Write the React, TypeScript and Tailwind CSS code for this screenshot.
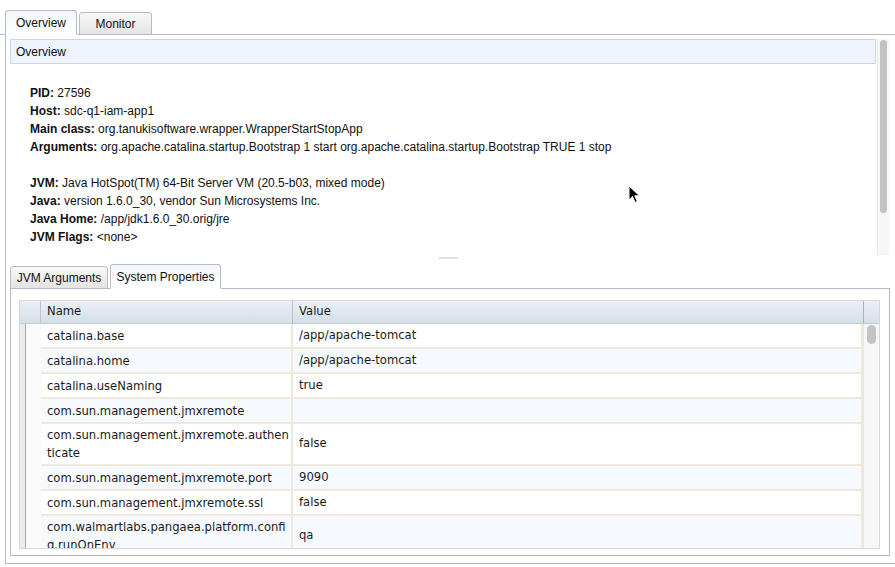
import React from "react";

const overviewLines: [string, string][] = [
  ["PID:", "27596"],
  ["Host:", "sdc-q1-iam-app1"],
  ["Main class:", "org.tanukisoftware.wrapper.WrapperStartStopApp"],
  ["Arguments:", "org.apache.catalina.startup.Bootstrap 1 start org.apache.catalina.startup.Bootstrap TRUE 1 stop"],
];

const jvmLines: [string, string][] = [
  ["JVM:", "Java HotSpot(TM) 64-Bit Server VM (20.5-b03, mixed mode)"],
  ["Java:", "version 1.6.0_30, vendor Sun Microsystems Inc."],
  ["Java Home:", "/app/jdk1.6.0_30.orig/jre"],
  ["JVM Flags:", "<none>"],
];

type Prop = { name: string[]; value: string; h: number };

const props: Prop[] = [
  { name: ["catalina.base"], value: "/app/apache-tomcat", h: 25 },
  { name: ["catalina.home"], value: "/app/apache-tomcat", h: 25 },
  { name: ["catalina.useNaming"], value: "true", h: 25 },
  { name: ["com.sun.management.jmxremote"], value: "", h: 25 },
  { name: ["com.sun.management.jmxremote.authen", "ticate"], value: "false", h: 42 },
  { name: ["com.sun.management.jmxremote.port"], value: "9090", h: 25 },
  { name: ["com.sun.management.jmxremote.ssl"], value: "false", h: 25 },
  { name: ["com.walmartlabs.pangaea.platform.confi", "g.runOnEnv"], value: "qa", h: 42 },
];

function Tab({ label, active, w }: { label: string; active?: boolean; w: string }) {
  return (
    <div
      className={
        "-mb-px flex items-center justify-center rounded-t-[3px] border border-[#b7bbc4] text-[12px] text-[#111] " +
        w +
        (active
          ? " h-[25px] border-b-white bg-gradient-to-b from-[#f3f7fc] to-white"
          : " h-[23px] bg-gradient-to-b from-[#f8f8f8] to-[#e4e4e4]")
      }
    >
      {label}
    </div>
  );
}

function InfoLine({ k, v }: { k: string; v: string }) {
  return (
    <div className="h-[18px] whitespace-nowrap">
      <span className="font-bold">{k}</span> {v}
    </div>
  );
}

function Cursor() {
  return (
    <svg className="absolute left-[628px] top-[185px]" width="13" height="19" viewBox="0 0 13 19">
      <path d="M1 1 L1 15 L4.5 11.5 L7 17.5 L9.3 16.5 L6.8 10.8 L11.5 10.8 Z" fill="#000" stroke="#fff" strokeWidth="1" strokeLinejoin="round" />
    </svg>
  );
}

export default function App() {
  return (
    <div className="relative h-[567px] w-[895px] overflow-hidden bg-white font-['Liberation_Sans',Arial,sans-serif] text-[#111]">
      {/* top tabs */}
      <div className="flex items-end gap-[2px] border-b border-[#b7bbc4] pl-[5px] pt-[10px]">
        <Tab label="Overview" active w="w-[72px]" />
        <Tab label="Monitor" w="w-[73px]" />
      </div>

      <div className="ml-[5px] h-[529px] w-[890px] border-b border-l border-[#b7bbc4] pl-[4px] pt-[4px]">
        {/* upper overview area */}
        <div className="flex h-[216px] w-[880px]">
          <div className="flex w-[866px] flex-col">
            <div className="flex h-[25px] items-center border border-[#cdd4e2] bg-[#eef3fd] px-[5px] text-[12px]">
              Overview
            </div>
            <div className="pl-[20px] pt-[20px] text-[12px] leading-[18px]">
              {overviewLines.map(([k, v]) => (
                <InfoLine key={k} k={k} v={v} />
              ))}
              <div className="h-[18px]" />
              {jvmLines.map(([k, v]) => (
                <InfoLine key={k} k={k} v={v} />
              ))}
            </div>
          </div>
          <div className="ml-[1px] flex w-[12px] flex-col border-l border-[#e8e8e8] bg-[#f6f6f6] pt-[1px]">
            <div className="mx-[2px] h-[173px] rounded-full bg-[#c2c2c2]" />
          </div>
        </div>

        {/* splitter */}
        <div className="flex h-[9px] justify-center pr-[8px] pt-[2px]">
          <div className="h-[2px] w-[19px] bg-[#dcdfe7]" />
        </div>

        {/* lower tabs */}
        <div className="flex w-[880px] items-end gap-[2px] border-b border-[#b7bbc4]">
          <Tab label="JVM Arguments" w="w-[98px]" />
          <Tab label="System Properties" active w="w-[111px]" />
        </div>

        <div className="h-[267px] w-[880px] border-b border-l border-r border-[#b7bbc4] pb-[6px] pl-[8px] pr-[9px] pt-[11px]">
          <div className="flex h-full flex-col border border-[#d8d8d8] font-['DejaVu_Sans',Verdana,sans-serif] text-[11.6px] text-[#1a1a1a]">
            {/* header */}
            <div className="flex h-[23px] border-b border-[#c3ccd5] bg-gradient-to-b from-[#ebf0f5] to-[#d4dfe8]">
              <div className="w-[21px] border-r border-[#b9c1ca]" />
              <div className="flex w-[252px] items-center border-r border-[#b9c1ca] px-[6px]">Name</div>
              <div className="flex w-[571px] items-center border-r border-[#a9b1ba] px-[6px]">Value</div>
              <div className="flex-1" />
            </div>
            {/* body */}
            <div className="flex min-h-0 flex-1">
              <div className="flex-1 overflow-hidden">
                {props.map((p, i) => (
                  <div
                    key={p.name.join("")}
                    style={{ height: p.h }}
                    className={"flex " + (i % 2 === 1 ? "bg-[#f6faff]" : "bg-white")}
                  >
                    <div className="flex w-[21px] bg-white">
                      <div className="w-[5px] bg-[#ebebeb]" />
                      <div className="w-px bg-[#a9a9a9]" />
                      <div className="flex-1 bg-[#fafafa]" />
                    </div>
                    <div className="flex w-[252px] flex-col justify-center border-b-2 border-r-2 border-[#efe8dd] px-[6px] leading-[18px]">
                      {p.name.map((n) => (
                        <div key={n} className="whitespace-nowrap">
                          {n}
                        </div>
                      ))}
                    </div>
                    <div className="flex flex-1 items-center border-b-2 border-r-2 border-[#efe8dd] px-[6px]">
                      {p.value}
                    </div>
                  </div>
                ))}
              </div>
              <div className="w-[16px] border-l border-[#e6e6e6] bg-[#f7f7f7] pt-[1px]">
                <div className="mx-[3px] h-[19px] rounded-full bg-[#c4c4c4]" />
              </div>
            </div>
          </div>
        </div>
      </div>

      <Cursor />
    </div>
  );
}
